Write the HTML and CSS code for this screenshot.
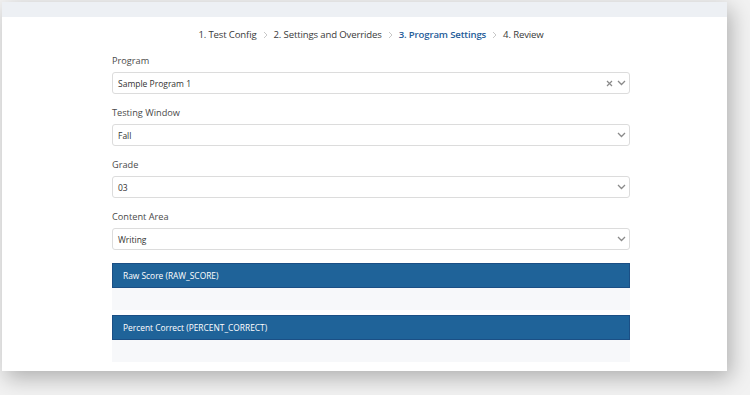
FILE: index.html
```html
<!DOCTYPE html>
<html>
<head>
<meta charset="utf-8">
<link rel="stylesheet" href="styles.css">
</head>
<body>
<div class="card">
  <div class="strip"></div>
  <div class="content">
    <nav class="steps">
      <span class="step">1. Test Config</span>
      <svg class="sep" width="5" height="8" viewBox="0 0 5 8"><polyline points="1,1 4,4 1,7" fill="none" stroke="#c8c8c8" stroke-width="1"/></svg>
      <span class="step">2. Settings and Overrides</span>
      <svg class="sep" width="5" height="8" viewBox="0 0 5 8"><polyline points="1,1 4,4 1,7" fill="none" stroke="#c8c8c8" stroke-width="1"/></svg>
      <span class="step active">3. Program Settings</span>
      <svg class="sep" width="5" height="8" viewBox="0 0 5 8"><polyline points="1,1 4,4 1,7" fill="none" stroke="#c8c8c8" stroke-width="1"/></svg>
      <span class="step">4. Review</span>
    </nav>

    <div class="field">
      <div class="label">Program</div>
      <div class="select">
        <span class="value">Sample Program 1</span>
        <span class="icons">
          <svg width="7" height="7" viewBox="0 0 7 7"><path d="M1 1 L6 6 M6 1 L1 6" stroke="#8a8a8a" stroke-width="1.2" fill="none"/></svg>
          <svg width="9" height="6" viewBox="0 0 9 6"><polyline points="1,1 4.5,4.5 8,1" fill="none" stroke="#8a8a8a" stroke-width="1.3"/></svg>
        </span>
      </div>
    </div>

    <div class="field">
      <div class="label">Testing Window</div>
      <div class="select">
        <span class="value">Fall</span>
        <span class="icons">
          <svg width="9" height="6" viewBox="0 0 9 6"><polyline points="1,1 4.5,4.5 8,1" fill="none" stroke="#8a8a8a" stroke-width="1.3"/></svg>
        </span>
      </div>
    </div>

    <div class="field">
      <div class="label">Grade</div>
      <div class="select">
        <span class="value">03</span>
        <span class="icons">
          <svg width="9" height="6" viewBox="0 0 9 6"><polyline points="1,1 4.5,4.5 8,1" fill="none" stroke="#8a8a8a" stroke-width="1.3"/></svg>
        </span>
      </div>
    </div>

    <div class="field">
      <div class="label">Content Area</div>
      <div class="select">
        <span class="value">Writing</span>
        <span class="icons">
          <svg width="9" height="6" viewBox="0 0 9 6"><polyline points="1,1 4.5,4.5 8,1" fill="none" stroke="#8a8a8a" stroke-width="1.3"/></svg>
        </span>
      </div>
    </div>

    <div class="panel">
      <div class="panel-head">Raw Score (RAW_SCORE)</div>
      <div class="panel-body"></div>
    </div>
    <div class="panel">
      <div class="panel-head">Percent Correct (PERCENT_CORRECT)</div>
      <div class="panel-body"></div>
    </div>
  </div>
</div>
</body>
</html>
```

FILE: styles.css
```css
html, body {
  margin: 0;
  padding: 0;
}
body {
  background: #f2f2f2;
  width: 750px;
  height: 395px;
  overflow: hidden;
  padding: 2px 0 0 2px;
  box-sizing: border-box;
  font-family: "Open Sans", "Liberation Sans", sans-serif;
}
.card {
  width: 725px;
  height: 369px;
  background: #ffffff;
  box-shadow: 4px 7px 20px rgba(0, 0, 0, 0.28);
  box-sizing: border-box;
}
.strip {
  height: 15px;
  background: #edf0f4;
}
.content {
  margin-left: 110px;
  width: 518px;
}
.steps {
  display: flex;
  justify-content: center;
  align-items: center;
  gap: 6px;
  padding: 11px 0 13px;
  height: 14px;
  font-size: 9.6px;
  letter-spacing: -0.15px;
  color: #3a3a3a;
  line-height: 14px;
}
.step.active {
  color: #1f5c99;
  font-weight: 600;
}
.sep {
  display: block;
}
.field {
  margin-bottom: 13px;
}
.label {
  font-size: 9.2px;
  line-height: 12px;
  color: #4a4a4a;
  margin-bottom: 5px;
}
.select {
  height: 22px;
  border: 1px solid #dcdcdc;
  border-radius: 3px;
  box-sizing: border-box;
  display: flex;
  align-items: center;
  justify-content: space-between;
  padding: 0 3px 0 5px;
  font-size: 8.5px;
  color: #333;
}
.icons {
  display: flex;
  align-items: center;
  gap: 4px;
}
.icons svg {
  display: block;
}
.panel {
  margin-bottom: 5px;
}
.panel-head {
  height: 25px;
  background: #1f6399;
  border: 1px solid #1b4f85;
  box-sizing: border-box;
  color: #ffffff;
  font-size: 8.4px;
  line-height: 23px;
  padding-left: 10px;
}
.panel-body {
  height: 22px;
  background: #f7f8fa;
}
```
